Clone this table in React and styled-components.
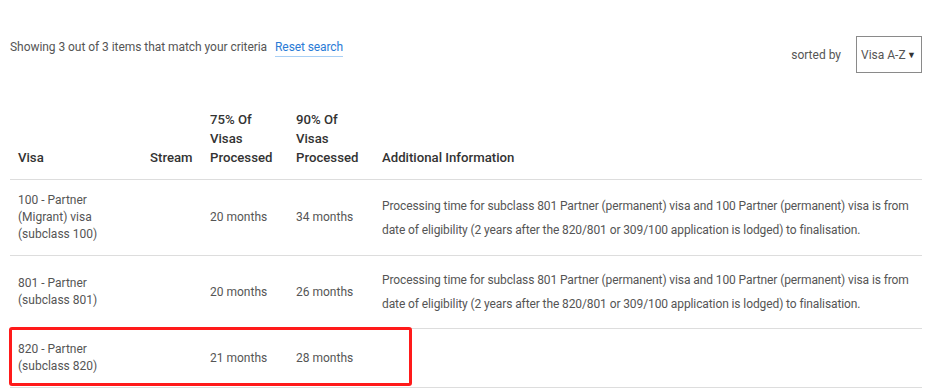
import styled, { createGlobalStyle } from "styled-components";

const rows = [
    {
        visa: ["100 - Partner", "(Migrant) visa", "(subclass 100)"],
        stream: "",
        p75: "20 months",
        p90: "34 months",
        info: "Processing time for subclass 801 Partner (permanent) visa and 100 Partner (permanent) visa is from date of eligibility (2 years after the 820/801 or 309/100 application is lodged) to finalisation.",
    },
    {
        visa: ["801 - Partner", "(subclass 801)"],
        stream: "",
        p75: "20 months",
        p90: "26 months",
        info: "Processing time for subclass 801 Partner (permanent) visa and 100 Partner (permanent) visa is from date of eligibility (2 years after the 820/801 or 309/100 application is lodged) to finalisation.",
    },
    {
        visa: ["820 - Partner", "(subclass 820)"],
        stream: "",
        p75: "21 months",
        p90: "28 months",
        info: "",
    },
]

function App(){
    return(
        <Page>
            <GlobalStyle />
            <TopBar>
                <Summary>
                    Showing 3 out of 3 items that match your criteria
                    <ResetLink href="#">Reset search</ResetLink>
                </Summary>
                <SortBox>
                    <span>sorted by</span>
                    <SortSelect>
                        Visa A-Z
                        <span>▼</span>
                    </SortSelect>
                </SortBox>
            </TopBar>
            <TableWrapper>
                <Table>
                    <colgroup>
                        <col style={{width: "132px"}} />
                        <col style={{width: "60px"}} />
                        <col style={{width: "86px"}} />
                        <col style={{width: "86px"}} />
                        <col />
                    </colgroup>
                    <thead>
                        <tr>
                            <Th>Visa</Th>
                            <Th>Stream</Th>
                            <Th>75% Of<br/>Visas<br/>Processed</Th>
                            <Th>90% Of<br/>Visas<br/>Processed</Th>
                            <Th>Additional Information</Th>
                        </tr>
                    </thead>
                    <tbody>
                        {rows.map((row) => {
                            return (
                                <tr key={row.visa[0]}>
                                    <Td>{row.visa.map((line) => <div key={line}>{line}</div>)}</Td>
                                    <Td>{row.stream}</Td>
                                    <Td>{row.p75}</Td>
                                    <Td>{row.p90}</Td>
                                    <Td $info>{row.info}</Td>
                                </tr>
                            )
                        })}
                    </tbody>
                </Table>
                <Highlight />
            </TableWrapper>
        </Page>
    )
}

const GlobalStyle = createGlobalStyle`
    body {
        margin: 0;
        background: #fff;
        font-family: Roboto, "Liberation Sans", sans-serif;
    }
`

const Page = styled.div`
    width: 929px;
    padding: 0 7px 0 10px;
    box-sizing: border-box;
    color: #555;
    font-size: 12px;
`

const TopBar = styled.div`
    display: flex;
    justify-content: space-between;
    align-items: flex-start;
    padding-top: 36px;
`

const Summary = styled.div`
    display: flex;
    align-items: center;
    gap: 8px;
    line-height: 20px;
    margin-top: 1px;
    color: #555;
    letter-spacing: -0.05px;
`

const ResetLink = styled.a`
    color: #2b7bd6;
    text-decoration: none;
    border-bottom: 1px solid #a9d0f5;
    line-height: 17px;
    margin-top: 2px;
    letter-spacing: -0.1px;
`

const SortBox = styled.div`
    display: flex;
    align-items: center;
    gap: 15px;
    color: #555;
`

const SortSelect = styled.div`
    display: flex;
    align-items: center;
    justify-content: space-between;
    width: 66px;
    height: 37px;
    box-sizing: border-box;
    padding: 0 5px 0 4px;
    border: 1px solid #8a8a8a;
    color: #555;
    span {
        font-size: 9px;
        color: #333;
    }
`

const TableWrapper = styled.div`
    position: relative;
    margin-top: 25px;
`

const Table = styled.table`
    width: 100%;
    table-layout: fixed;
    border-collapse: collapse;
`

const Th = styled.th`
    text-align: left;
    vertical-align: bottom;
    padding: 12px 8px 12px 8px;
    font-size: 13.2px;
    font-weight: 500;
    line-height: 19px;
    color: #333;
    border-bottom: 1px solid #ddd;
    white-space: nowrap;
`

const Td = styled.td`
    vertical-align: middle;
    padding: 12px 8px;
    line-height: ${props => props.$info ? "24px" : "17px"};
    color: #555;
    border-bottom: 1px solid #ddd;
    white-space: nowrap;
    ${props => props.$info && "white-space: normal; letter-spacing: -0.1px;"}
`

const Highlight = styled.div`
    position: absolute;
    left: -1px;
    bottom: 2px;
    width: 403px;
    height: 59px;
    box-sizing: border-box;
    border: 3px solid #ff1a1a;
    border-radius: 3px;
    pointer-events: none;
`

export default App;
